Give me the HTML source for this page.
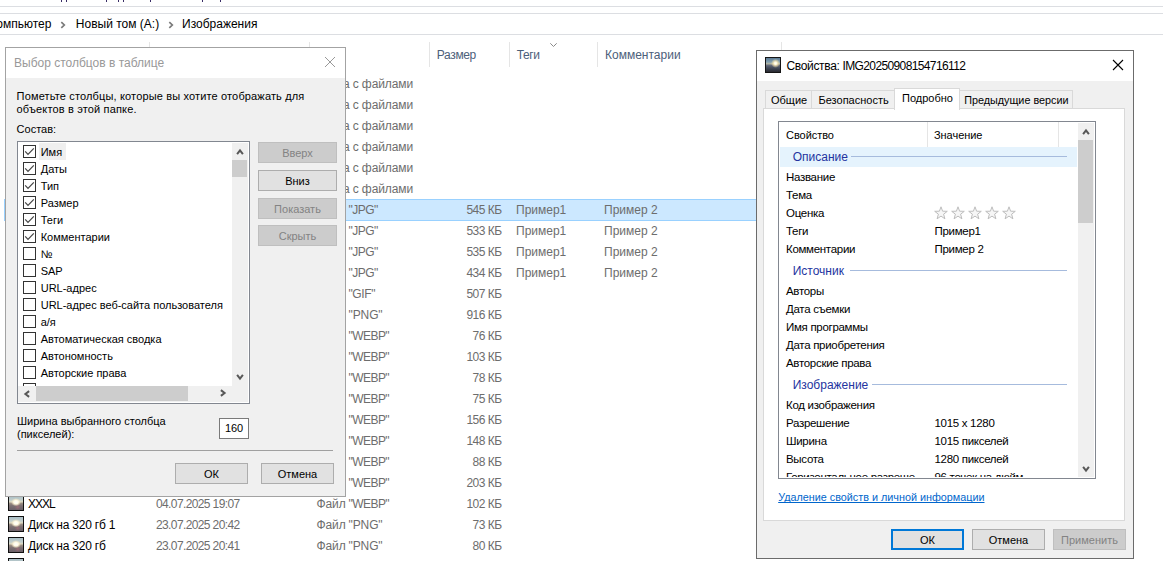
<!DOCTYPE html>
<html><head><meta charset="utf-8"><style>
html,body{margin:0;padding:0;background:#fff;width:1163px;height:561px;overflow:hidden;position:relative}
.t{position:absolute;white-space:pre;line-height:1;font-family:"Liberation Sans",sans-serif}
.b{position:absolute}
.thumb{width:16px;height:16px;box-sizing:border-box;border:1px solid #111;background:radial-gradient(ellipse 5px 4px at 50% 44%, #ffffff 0%, #fffbe6 45%, rgba(250,235,200,0.55) 75%, transparent 100%), radial-gradient(circle at 62% 80%, rgba(190,110,125,0.5) 0px, transparent 3px), linear-gradient(to bottom, #a9bec6 0%, #c3cfcc 30%, #ddd8c0 42%, #9a8e84 52%, #7c7072 70%, #6a6068 100%)}
.thumb2{width:16px;height:16px;box-sizing:border-box;border:1px solid #151515;background:radial-gradient(circle at 68% 38%, #ffffff 0px, #fffbe0 1.2px, rgba(250,230,170,0.7) 2.5px, transparent 4.5px), linear-gradient(to bottom, #5a7a94 0%, #86a2b2 30%, #b8b8a0 42%, #6a7080 50%, #4a5262 65%, #383e4a 82%, #2a2a30 100%)}
</style></head><body>
<div class="b" style="left:0px;top:6px;width:1163px;height:1px;background:#dcdee2;"></div>
<div class="b" style="left:0px;top:13px;width:1163px;height:1px;background:#dcdee2;"></div>
<div class="b" style="left:0px;top:34px;width:1163px;height:1px;background:#dcdee2;"></div>
<div class="t" style="left:-10.70px;top:17.74px;font-size:12px;color:#000;">Компьютер</div>
<svg class="b" style="left:60px;top:21px" width="6" height="8" viewBox="0 0 6 8"><path d="M1.3 1.2 L4.3 4 L1.3 6.8" fill="none" stroke="#7a7a7a" stroke-width="1.7"/></svg>
<div class="t" style="left:75.80px;top:17.74px;font-size:12px;color:#000;">Новый том (A:)</div>
<svg class="b" style="left:167.5px;top:21px" width="6" height="8" viewBox="0 0 6 8"><path d="M1.3 1.2 L4.3 4 L1.3 6.8" fill="none" stroke="#7a7a7a" stroke-width="1.7"/></svg>
<div class="t" style="left:182.00px;top:17.74px;font-size:12px;color:#000;">Изображения</div>
<div class="b" style="left:149px;top:42px;width:1px;height:25px;background:#e5e5e5;"></div>
<div class="b" style="left:309px;top:42px;width:1px;height:25px;background:#e5e5e5;"></div>
<div class="b" style="left:429px;top:42px;width:1px;height:25px;background:#e5e5e5;"></div>
<div class="b" style="left:509px;top:42px;width:1px;height:25px;background:#e5e5e5;"></div>
<div class="b" style="left:597px;top:42px;width:1px;height:25px;background:#e5e5e5;"></div>
<div class="b" style="left:781px;top:42px;width:1px;height:25px;background:#e5e5e5;"></div>
<div class="t" style="left:436.80px;top:48.84px;font-size:12px;color:#4c607a;letter-spacing:-0.35px;">Размер</div>
<div class="t" style="left:516.80px;top:48.84px;font-size:12px;color:#4c607a;letter-spacing:-0.45px;">Теги</div>
<div class="t" style="left:605.00px;top:48.84px;font-size:12px;color:#4c607a;">Комментарии</div>
<svg class="b" style="left:549px;top:42px" width="10" height="6" viewBox="0 0 10 6"><path d="M1.3 1.3 L4.5 4.5 L7.7 1.3" fill="none" stroke="#8a8a8a" stroke-width="1"/></svg>
<div class="t" style="left:316.00px;top:77.64px;font-size:12px;color:#6d6d6d;letter-spacing:-0.1px;">Папка с файлами</div>
<div class="t" style="left:316.00px;top:98.64px;font-size:12px;color:#6d6d6d;letter-spacing:-0.1px;">Папка с файлами</div>
<div class="t" style="left:316.00px;top:119.64px;font-size:12px;color:#6d6d6d;letter-spacing:-0.1px;">Папка с файлами</div>
<div class="t" style="left:316.00px;top:140.64px;font-size:12px;color:#6d6d6d;letter-spacing:-0.1px;">Папка с файлами</div>
<div class="t" style="left:316.00px;top:161.64px;font-size:12px;color:#6d6d6d;letter-spacing:-0.1px;">Папка с файлами</div>
<div class="t" style="left:316.00px;top:182.64px;font-size:12px;color:#6d6d6d;letter-spacing:-0.1px;">Папка с файлами</div>
<div class="b" style="left:4px;top:199px;width:800px;height:22px;background:#cce8ff;border:1px solid #99d1ff;box-sizing:border-box;"></div>
<div class="t" style="left:316.50px;top:203.64px;font-size:12px;color:#6d6d6d;letter-spacing:-0.1px;">Файл</div>
<div class="t" style="left:348.50px;top:203.64px;font-size:12px;color:#6d6d6d;letter-spacing:-0.5px;">"JPG"</div>
<div class="t" style="right:661.40px;top:203.64px;font-size:12px;color:#6d6d6d;letter-spacing:-0.5px;">545 КБ</div>
<div class="t" style="left:516.00px;top:203.64px;font-size:12px;color:#6d6d6d;">Пример1</div>
<div class="t" style="left:604.00px;top:203.64px;font-size:12px;color:#6d6d6d;">Пример 2</div>
<div class="t" style="left:316.50px;top:224.64px;font-size:12px;color:#6d6d6d;letter-spacing:-0.1px;">Файл</div>
<div class="t" style="left:348.50px;top:224.64px;font-size:12px;color:#6d6d6d;letter-spacing:-0.5px;">"JPG"</div>
<div class="t" style="right:661.40px;top:224.64px;font-size:12px;color:#6d6d6d;letter-spacing:-0.5px;">533 КБ</div>
<div class="t" style="left:516.00px;top:224.64px;font-size:12px;color:#6d6d6d;">Пример1</div>
<div class="t" style="left:604.00px;top:224.64px;font-size:12px;color:#6d6d6d;">Пример 2</div>
<div class="t" style="left:316.50px;top:245.64px;font-size:12px;color:#6d6d6d;letter-spacing:-0.1px;">Файл</div>
<div class="t" style="left:348.50px;top:245.64px;font-size:12px;color:#6d6d6d;letter-spacing:-0.5px;">"JPG"</div>
<div class="t" style="right:661.40px;top:245.64px;font-size:12px;color:#6d6d6d;letter-spacing:-0.5px;">535 КБ</div>
<div class="t" style="left:516.00px;top:245.64px;font-size:12px;color:#6d6d6d;">Пример1</div>
<div class="t" style="left:604.00px;top:245.64px;font-size:12px;color:#6d6d6d;">Пример 2</div>
<div class="t" style="left:316.50px;top:266.64px;font-size:12px;color:#6d6d6d;letter-spacing:-0.1px;">Файл</div>
<div class="t" style="left:348.50px;top:266.64px;font-size:12px;color:#6d6d6d;letter-spacing:-0.5px;">"JPG"</div>
<div class="t" style="right:661.40px;top:266.64px;font-size:12px;color:#6d6d6d;letter-spacing:-0.5px;">434 КБ</div>
<div class="t" style="left:516.00px;top:266.64px;font-size:12px;color:#6d6d6d;">Пример1</div>
<div class="t" style="left:604.00px;top:266.64px;font-size:12px;color:#6d6d6d;">Пример 2</div>
<div class="t" style="left:316.50px;top:287.64px;font-size:12px;color:#6d6d6d;letter-spacing:-0.1px;">Файл</div>
<div class="t" style="left:348.50px;top:287.64px;font-size:12px;color:#6d6d6d;letter-spacing:-0.4px;">"GIF"</div>
<div class="t" style="right:661.40px;top:287.64px;font-size:12px;color:#6d6d6d;letter-spacing:-0.5px;">507 КБ</div>
<div class="t" style="left:316.50px;top:308.64px;font-size:12px;color:#6d6d6d;letter-spacing:-0.1px;">Файл</div>
<div class="t" style="left:348.50px;top:308.64px;font-size:12px;color:#6d6d6d;letter-spacing:-0.1px;">"PNG"</div>
<div class="t" style="right:661.40px;top:308.64px;font-size:12px;color:#6d6d6d;letter-spacing:-0.5px;">916 КБ</div>
<div class="t" style="left:316.50px;top:329.64px;font-size:12px;color:#6d6d6d;letter-spacing:-0.1px;">Файл</div>
<div class="t" style="left:348.50px;top:329.64px;font-size:12px;color:#6d6d6d;letter-spacing:-0.55px;">"WEBP"</div>
<div class="t" style="right:661.40px;top:329.64px;font-size:12px;color:#6d6d6d;letter-spacing:-0.5px;">76 КБ</div>
<div class="t" style="left:316.50px;top:350.64px;font-size:12px;color:#6d6d6d;letter-spacing:-0.1px;">Файл</div>
<div class="t" style="left:348.50px;top:350.64px;font-size:12px;color:#6d6d6d;letter-spacing:-0.55px;">"WEBP"</div>
<div class="t" style="right:661.40px;top:350.64px;font-size:12px;color:#6d6d6d;letter-spacing:-0.5px;">103 КБ</div>
<div class="t" style="left:316.50px;top:371.64px;font-size:12px;color:#6d6d6d;letter-spacing:-0.1px;">Файл</div>
<div class="t" style="left:348.50px;top:371.64px;font-size:12px;color:#6d6d6d;letter-spacing:-0.55px;">"WEBP"</div>
<div class="t" style="right:661.40px;top:371.64px;font-size:12px;color:#6d6d6d;letter-spacing:-0.5px;">78 КБ</div>
<div class="t" style="left:316.50px;top:392.64px;font-size:12px;color:#6d6d6d;letter-spacing:-0.1px;">Файл</div>
<div class="t" style="left:348.50px;top:392.64px;font-size:12px;color:#6d6d6d;letter-spacing:-0.55px;">"WEBP"</div>
<div class="t" style="right:661.40px;top:392.64px;font-size:12px;color:#6d6d6d;letter-spacing:-0.5px;">75 КБ</div>
<div class="t" style="left:316.50px;top:413.64px;font-size:12px;color:#6d6d6d;letter-spacing:-0.1px;">Файл</div>
<div class="t" style="left:348.50px;top:413.64px;font-size:12px;color:#6d6d6d;letter-spacing:-0.55px;">"WEBP"</div>
<div class="t" style="right:661.40px;top:413.64px;font-size:12px;color:#6d6d6d;letter-spacing:-0.5px;">156 КБ</div>
<div class="t" style="left:316.50px;top:434.64px;font-size:12px;color:#6d6d6d;letter-spacing:-0.1px;">Файл</div>
<div class="t" style="left:348.50px;top:434.64px;font-size:12px;color:#6d6d6d;letter-spacing:-0.55px;">"WEBP"</div>
<div class="t" style="right:661.40px;top:434.64px;font-size:12px;color:#6d6d6d;letter-spacing:-0.5px;">148 КБ</div>
<div class="t" style="left:316.50px;top:455.64px;font-size:12px;color:#6d6d6d;letter-spacing:-0.1px;">Файл</div>
<div class="t" style="left:348.50px;top:455.64px;font-size:12px;color:#6d6d6d;letter-spacing:-0.55px;">"WEBP"</div>
<div class="t" style="right:661.40px;top:455.64px;font-size:12px;color:#6d6d6d;letter-spacing:-0.5px;">88 КБ</div>
<div class="t" style="left:316.50px;top:476.64px;font-size:12px;color:#6d6d6d;letter-spacing:-0.1px;">Файл</div>
<div class="t" style="left:348.50px;top:476.64px;font-size:12px;color:#6d6d6d;letter-spacing:-0.55px;">"WEBP"</div>
<div class="t" style="right:661.40px;top:476.64px;font-size:12px;color:#6d6d6d;letter-spacing:-0.5px;">203 КБ</div>
<div class="b thumb" style="left:8px;top:495px"></div>
<div class="t" style="left:28.00px;top:497.64px;font-size:12px;color:#000;letter-spacing:-1.0px;">XXXL</div>
<div class="t" style="left:156.00px;top:497.64px;font-size:12px;color:#6d6d6d;letter-spacing:-0.62px;">04.07.2025 19:07</div>
<div class="t" style="left:316.50px;top:497.64px;font-size:12px;color:#6d6d6d;letter-spacing:-0.1px;">Файл</div>
<div class="t" style="left:348.50px;top:497.64px;font-size:12px;color:#6d6d6d;letter-spacing:-0.55px;">"WEBP"</div>
<div class="t" style="right:661.40px;top:497.64px;font-size:12px;color:#6d6d6d;letter-spacing:-0.5px;">102 КБ</div>
<div class="b thumb" style="left:8px;top:516px"></div>
<div class="t" style="left:28.00px;top:518.64px;font-size:12px;color:#000;letter-spacing:-0.22px;">Диск на 320 гб 1</div>
<div class="t" style="left:156.00px;top:518.64px;font-size:12px;color:#6d6d6d;letter-spacing:-0.62px;">23.07.2025 20:42</div>
<div class="t" style="left:316.50px;top:518.64px;font-size:12px;color:#6d6d6d;letter-spacing:-0.1px;">Файл</div>
<div class="t" style="left:348.50px;top:518.64px;font-size:12px;color:#6d6d6d;letter-spacing:-0.1px;">"PNG"</div>
<div class="t" style="right:661.40px;top:518.64px;font-size:12px;color:#6d6d6d;letter-spacing:-0.5px;">73 КБ</div>
<div class="b thumb" style="left:8px;top:537px"></div>
<div class="t" style="left:28.00px;top:539.64px;font-size:12px;color:#000;letter-spacing:-0.22px;">Диск на 320 гб</div>
<div class="t" style="left:156.00px;top:539.64px;font-size:12px;color:#6d6d6d;letter-spacing:-0.62px;">23.07.2025 20:41</div>
<div class="t" style="left:316.50px;top:539.64px;font-size:12px;color:#6d6d6d;letter-spacing:-0.1px;">Файл</div>
<div class="t" style="left:348.50px;top:539.64px;font-size:12px;color:#6d6d6d;letter-spacing:-0.1px;">"PNG"</div>
<div class="t" style="right:661.40px;top:539.64px;font-size:12px;color:#6d6d6d;letter-spacing:-0.5px;">80 КБ</div>
<div class="b thumb" style="left:8px;top:558px"></div>
<div class="b" style="left:61px;top:0px;width:1.2px;height:1.5px;background:#3a2d66"></div>
<div class="b" style="left:66px;top:0px;width:1.2px;height:1.5px;background:#3a2d66"></div>
<div class="b" style="left:106px;top:0px;width:1.2px;height:1.5px;background:#3a2d66"></div>
<div class="b" style="left:118px;top:0px;width:1.2px;height:1.5px;background:#3a2d66"></div>
<div class="b" style="left:123px;top:0px;width:1.2px;height:1.5px;background:#3a2d66"></div>
<div class="b" style="left:150px;top:0px;width:1.2px;height:1.5px;background:#3a2d66"></div>
<div class="b" style="left:201.5px;top:0px;width:1.2px;height:1.5px;background:#3a2d66"></div>
<div class="b" style="left:220px;top:0px;width:1.2px;height:1.5px;background:#3a2d66"></div>
<div class="b" style="left:5px;top:47px;width:341px;height:450px;background:#f0f0f0;border:1px solid #a3a3a3;box-sizing:border-box"></div>
<div class="b" style="left:6px;top:48px;width:339px;height:30px;background:#fff;"></div>
<div class="t" style="left:14.00px;top:56.54px;font-size:12px;color:#999;">Выбор столбцов в таблице</div>
<svg class="b" style="left:324px;top:56px" width="12" height="12" viewBox="0 0 12 12"><path d="M1 1 L11 11 M11 1 L1 11" stroke="#999" stroke-width="1"/></svg>
<div class="t" style="left:16.60px;top:91.39px;font-size:11px;color:#000;letter-spacing:0.15px;">Пометьте столбцы, которые вы хотите отображать для</div>
<div class="t" style="left:16.60px;top:104.39px;font-size:11px;color:#000;letter-spacing:0.16px;">объектов в этой папке.</div>
<div class="t" style="left:16.60px;top:124.39px;font-size:11px;color:#000;">Состав:</div>
<div class="b" style="left:17px;top:141px;width:233px;height:263px;background:#fff;border:1px solid #828790;box-sizing:border-box;"></div>
<div class="b" style="left:18px;top:142px;width:214px;height:244px;overflow:hidden">
<div class="b" style="left:21px;top:1px;width:27px;height:17px;background:#efefef;"></div>
<div class="b" style="left:5px;top:3px;width:13px;height:13px;border:1px solid #333;box-sizing:border-box;background:#fff"></div>
<svg class="b" style="left:5px;top:3px" width="13" height="13" viewBox="0 0 13 13"><path d="M2.2 6.3 L5 9.3 L10.8 3.3" fill="none" stroke="#444" stroke-width="1.2"/></svg>
<div class="t" style="left:22.700000000000003px;top:5.09px;font-size:11px;color:#000">Имя</div>
<div class="b" style="left:5px;top:20px;width:13px;height:13px;border:1px solid #333;box-sizing:border-box;background:#fff"></div>
<svg class="b" style="left:5px;top:20px" width="13" height="13" viewBox="0 0 13 13"><path d="M2.2 6.3 L5 9.3 L10.8 3.3" fill="none" stroke="#444" stroke-width="1.2"/></svg>
<div class="t" style="left:22.700000000000003px;top:22.09px;font-size:11px;color:#000">Даты</div>
<div class="b" style="left:5px;top:37px;width:13px;height:13px;border:1px solid #333;box-sizing:border-box;background:#fff"></div>
<svg class="b" style="left:5px;top:37px" width="13" height="13" viewBox="0 0 13 13"><path d="M2.2 6.3 L5 9.3 L10.8 3.3" fill="none" stroke="#444" stroke-width="1.2"/></svg>
<div class="t" style="left:22.700000000000003px;top:39.09px;font-size:11px;color:#000">Тип</div>
<div class="b" style="left:5px;top:54px;width:13px;height:13px;border:1px solid #333;box-sizing:border-box;background:#fff"></div>
<svg class="b" style="left:5px;top:54px" width="13" height="13" viewBox="0 0 13 13"><path d="M2.2 6.3 L5 9.3 L10.8 3.3" fill="none" stroke="#444" stroke-width="1.2"/></svg>
<div class="t" style="left:22.700000000000003px;top:56.09px;font-size:11px;color:#000">Размер</div>
<div class="b" style="left:5px;top:71px;width:13px;height:13px;border:1px solid #333;box-sizing:border-box;background:#fff"></div>
<svg class="b" style="left:5px;top:71px" width="13" height="13" viewBox="0 0 13 13"><path d="M2.2 6.3 L5 9.3 L10.8 3.3" fill="none" stroke="#444" stroke-width="1.2"/></svg>
<div class="t" style="left:22.700000000000003px;top:73.09px;font-size:11px;color:#000">Теги</div>
<div class="b" style="left:5px;top:88px;width:13px;height:13px;border:1px solid #333;box-sizing:border-box;background:#fff"></div>
<svg class="b" style="left:5px;top:88px" width="13" height="13" viewBox="0 0 13 13"><path d="M2.2 6.3 L5 9.3 L10.8 3.3" fill="none" stroke="#444" stroke-width="1.2"/></svg>
<div class="t" style="left:22.700000000000003px;top:90.09px;font-size:11px;color:#000">Комментарии</div>
<div class="b" style="left:5px;top:105px;width:13px;height:13px;border:1px solid #333;box-sizing:border-box;background:#fff"></div>
<div class="t" style="left:22.700000000000003px;top:107.09px;font-size:11px;color:#000">№</div>
<div class="b" style="left:5px;top:122px;width:13px;height:13px;border:1px solid #333;box-sizing:border-box;background:#fff"></div>
<div class="t" style="left:22.700000000000003px;top:124.09px;font-size:11px;color:#000">SAP</div>
<div class="b" style="left:5px;top:139px;width:13px;height:13px;border:1px solid #333;box-sizing:border-box;background:#fff"></div>
<div class="t" style="left:22.700000000000003px;top:141.09px;font-size:11px;color:#000">URL-адрес</div>
<div class="b" style="left:5px;top:156px;width:13px;height:13px;border:1px solid #333;box-sizing:border-box;background:#fff"></div>
<div class="t" style="left:22.700000000000003px;top:158.09px;font-size:11px;color:#000">URL-адрес веб-сайта пользователя</div>
<div class="b" style="left:5px;top:173px;width:13px;height:13px;border:1px solid #333;box-sizing:border-box;background:#fff"></div>
<div class="t" style="left:22.700000000000003px;top:175.09px;font-size:11px;color:#000">а/я</div>
<div class="b" style="left:5px;top:190px;width:13px;height:13px;border:1px solid #333;box-sizing:border-box;background:#fff"></div>
<div class="t" style="left:22.700000000000003px;top:192.09px;font-size:11px;color:#000">Автоматическая сводка</div>
<div class="b" style="left:5px;top:207px;width:13px;height:13px;border:1px solid #333;box-sizing:border-box;background:#fff"></div>
<div class="t" style="left:22.700000000000003px;top:209.09px;font-size:11px;color:#000">Автономность</div>
<div class="b" style="left:5px;top:224px;width:13px;height:13px;border:1px solid #333;box-sizing:border-box;background:#fff"></div>
<div class="t" style="left:22.700000000000003px;top:226.09px;font-size:11px;color:#000">Авторские права</div>
<div class="b" style="left:5px;top:241px;width:13px;height:13px;border:1px solid #333;box-sizing:border-box;background:#fff"></div>
<div class="t" style="left:22.700000000000003px;top:243.09px;font-size:11px;color:#000">Авторы</div>
</div>
<div class="b" style="left:232px;top:143px;width:16px;height:259px;background:#f0f0f0;"></div>
<div class="b" style="left:232px;top:160px;width:15px;height:17px;background:#cdcdcd;"></div>
<svg class="b" style="left:233.50px;top:146.30px" width="12" height="12" viewBox="0 0 12 12"><path d="M3.1 8.1 L6 4.4 L8.9 8.1" fill="none" stroke="#585858" stroke-width="2.0" stroke-linejoin="miter"/></svg>
<svg class="b" style="left:233.50px;top:370.70px" width="12" height="12" viewBox="0 0 12 12"><path d="M3.1 3.9 L6 7.6 L8.9 3.9" fill="none" stroke="#585858" stroke-width="2.0" stroke-linejoin="miter"/></svg>
<div class="b" style="left:18px;top:386px;width:214px;height:16px;background:#f0f0f0;"></div>
<div class="b" style="left:36px;top:386px;width:152px;height:15px;background:#cdcdcd;"></div>
<svg class="b" style="left:21.30px;top:387.80px" width="12" height="12" viewBox="0 0 12 12"><path d="M8.1 3.1 L4.4 6 L8.1 8.9" fill="none" stroke="#585858" stroke-width="2.0" stroke-linejoin="miter"/></svg>
<svg class="b" style="left:217.30px;top:387.40px" width="12" height="12" viewBox="0 0 12 12"><path d="M3.9 3.1 L7.6 6 L3.9 8.9" fill="none" stroke="#585858" stroke-width="2.0" stroke-linejoin="miter"/></svg>
<div class="b" style="left:258px;top:142px;width:79px;height:21px;background:#cccccc;border:1px solid #bfbfbf;box-sizing:border-box"></div>
<div class="t" style="left:258px;top:147.62px;width:79px;text-align:center;font-size:11px;color:#838383">Вверх</div>
<div class="b" style="left:258px;top:170px;width:79px;height:21px;background:#e1e1e1;border:1px solid #adadad;box-sizing:border-box"></div>
<div class="t" style="left:258px;top:175.62px;width:79px;text-align:center;font-size:11px;color:#000">Вниз</div>
<div class="b" style="left:258px;top:198px;width:79px;height:21px;background:#cccccc;border:1px solid #bfbfbf;box-sizing:border-box"></div>
<div class="t" style="left:258px;top:203.62px;width:79px;text-align:center;font-size:11px;color:#838383">Показать</div>
<div class="b" style="left:258px;top:225px;width:79px;height:21px;background:#cccccc;border:1px solid #bfbfbf;box-sizing:border-box"></div>
<div class="t" style="left:258px;top:230.62px;width:79px;text-align:center;font-size:11px;color:#838383">Скрыть</div>
<div class="t" style="left:17.00px;top:416.39px;font-size:11px;color:#000;">Ширина выбранного столбца</div>
<div class="t" style="left:17.00px;top:428.99px;font-size:11px;color:#000;">(пикселей):</div>
<div class="b" style="left:219px;top:418px;width:30px;height:21px;background:#fff;border:1px solid #7a7a7a;box-sizing:border-box;"></div>
<div class="t" style="left:219px;top:423.2px;width:30px;text-align:center;font-size:11px;letter-spacing:-0.2px">160</div>
<div class="b" style="left:17px;top:450px;width:316px;height:1px;background:#a0a0a0;"></div>
<div class="b" style="left:175px;top:463px;width:73px;height:21px;background:#e1e1e1;border:1px solid #adadad;box-sizing:border-box"></div>
<div class="t" style="left:175px;top:468.62px;width:73px;text-align:center;font-size:11px;color:#000">ОК</div>
<div class="b" style="left:261px;top:463px;width:73px;height:21px;background:#e1e1e1;border:1px solid #adadad;box-sizing:border-box"></div>
<div class="t" style="left:261px;top:468.62px;width:73px;text-align:center;font-size:11px;color:#000">Отмена</div>
<div class="b" style="left:756px;top:50px;width:378px;height:509px;background:#f0f0f0;border:1px solid #6b6b6b;box-sizing:border-box"></div>
<div class="b" style="left:757px;top:51px;width:376px;height:30px;background:#fff;"></div>
<div class="b thumb2" style="left:765px;top:57px"></div>
<div class="t" style="left:786.50px;top:59.84px;font-size:12px;color:#000;"><span style="letter-spacing:-0.34px">Свойства: </span><span style="letter-spacing:-0.62px">IMG20250908154716112</span></div>
<svg class="b" style="left:1112px;top:59px" width="12" height="12" viewBox="0 0 12 12"><path d="M1 1 L11 11 M11 1 L1 11" stroke="#000" stroke-width="1.1"/></svg>
<div class="b" style="left:763px;top:108px;width:362px;height:413px;background:#fff;border:1px solid #d9d9d9;box-sizing:border-box;"></div>
<div class="b" style="left:765px;top:90px;width:47px;height:19px;background:#f0f0f0;border:1px solid #d9d9d9;box-sizing:border-box"></div>
<div class="b" style="left:811px;top:90px;width:84px;height:19px;background:#f0f0f0;border:1px solid #d9d9d9;box-sizing:border-box"></div>
<div class="b" style="left:959px;top:90px;width:114px;height:19px;background:#f0f0f0;border:1px solid #d9d9d9;box-sizing:border-box"></div>
<div class="b" style="left:894px;top:88px;width:66px;height:22px;background:#fff;border:1px solid #d9d9d9;border-bottom:none;box-sizing:border-box"></div>
<div class="t" style="left:771.00px;top:94.89px;font-size:11px;color:#000;">Общие</div>
<div class="t" style="left:818.50px;top:94.89px;font-size:11px;color:#000;">Безопасность</div>
<div class="t" style="left:902.00px;top:92.89px;font-size:11px;color:#000;">Подробно</div>
<div class="t" style="left:964.20px;top:95.06px;font-size:10.8px;color:#000;">Предыдущие версии</div>
<div class="b" style="left:778px;top:121px;width:318px;height:358px;background:#fff;border:1px solid #828790;box-sizing:border-box;"></div>
<div class="b" style="left:927px;top:122px;width:1px;height:25px;background:#e5e5e5;"></div>
<div class="b" style="left:1058px;top:122px;width:1px;height:25px;background:#e5e5e5;"></div>
<div class="t" style="left:786.00px;top:129.99px;font-size:11px;color:#000;letter-spacing:-0.05px;">Свойство</div>
<div class="t" style="left:934.00px;top:129.99px;font-size:11px;color:#000;letter-spacing:-0.05px;">Значение</div>
<div class="b" style="left:1078px;top:123px;width:16px;height:354px;background:#f0f0f0;"></div>
<div class="b" style="left:1078px;top:140px;width:15px;height:83px;background:#cdcdcd;"></div>
<svg class="b" style="left:1079.50px;top:126.20px" width="12" height="12" viewBox="0 0 12 12"><path d="M3.1 8.1 L6 4.4 L8.9 8.1" fill="none" stroke="#585858" stroke-width="2.0" stroke-linejoin="miter"/></svg>
<svg class="b" style="left:1079.80px;top:463.20px" width="12" height="12" viewBox="0 0 12 12"><path d="M3.1 3.9 L6 7.6 L8.9 3.9" fill="none" stroke="#585858" stroke-width="2.0" stroke-linejoin="miter"/></svg>
<div class="b" style="left:779px;top:147px;width:299px;height:330px;overflow:hidden">
<div class="b" style="left:1px;top:0px;width:297px;height:20px;background:#e5f3fd"></div>
<div class="t" style="left:13.70px;top:3.74px;font-size:12px;color:#2434a0;letter-spacing:0px">Описание</div>
<div class="b" style="left:72px;top:9px;width:216px;height:1px;background:#a6bbdd"></div>
<div class="t" style="left:13.70px;top:118.44px;font-size:12px;color:#2434a0;letter-spacing:0px">Источник</div>
<div class="b" style="left:71px;top:123px;width:217px;height:1px;background:#a6bbdd"></div>
<div class="t" style="left:13.70px;top:231.74px;font-size:12px;color:#2434a0;letter-spacing:0px">Изображение</div>
<div class="b" style="left:93px;top:237px;width:195px;height:1px;background:#a6bbdd"></div>
<div class="t" style="left:7.00px;top:24.97px;font-size:11.5px;color:#000;letter-spacing:-0.3px">Название</div>
<div class="t" style="left:7.00px;top:42.97px;font-size:11.5px;color:#000;letter-spacing:-0.3px">Тема</div>
<div class="t" style="left:7.00px;top:60.97px;font-size:11.5px;color:#000;letter-spacing:-0.3px">Оценка</div>
<svg class="b" style="left:155px;top:59px" width="14" height="14" viewBox="0 0 14 14"><path d="M7 0.8 L8.6 5.2 L13.3 5.3 L9.6 8.2 L10.9 12.8 L7 10.1 L3.1 12.8 L4.4 8.2 L0.7 5.3 L5.4 5.2 Z" fill="#f6f6f6" stroke="#bdbdbd" stroke-width="1"/></svg>
<svg class="b" style="left:172px;top:59px" width="14" height="14" viewBox="0 0 14 14"><path d="M7 0.8 L8.6 5.2 L13.3 5.3 L9.6 8.2 L10.9 12.8 L7 10.1 L3.1 12.8 L4.4 8.2 L0.7 5.3 L5.4 5.2 Z" fill="#f6f6f6" stroke="#bdbdbd" stroke-width="1"/></svg>
<svg class="b" style="left:189px;top:59px" width="14" height="14" viewBox="0 0 14 14"><path d="M7 0.8 L8.6 5.2 L13.3 5.3 L9.6 8.2 L10.9 12.8 L7 10.1 L3.1 12.8 L4.4 8.2 L0.7 5.3 L5.4 5.2 Z" fill="#f6f6f6" stroke="#bdbdbd" stroke-width="1"/></svg>
<svg class="b" style="left:206px;top:59px" width="14" height="14" viewBox="0 0 14 14"><path d="M7 0.8 L8.6 5.2 L13.3 5.3 L9.6 8.2 L10.9 12.8 L7 10.1 L3.1 12.8 L4.4 8.2 L0.7 5.3 L5.4 5.2 Z" fill="#f6f6f6" stroke="#bdbdbd" stroke-width="1"/></svg>
<svg class="b" style="left:223px;top:59px" width="14" height="14" viewBox="0 0 14 14"><path d="M7 0.8 L8.6 5.2 L13.3 5.3 L9.6 8.2 L10.9 12.8 L7 10.1 L3.1 12.8 L4.4 8.2 L0.7 5.3 L5.4 5.2 Z" fill="#f6f6f6" stroke="#bdbdbd" stroke-width="1"/></svg>
<div class="t" style="left:7.00px;top:78.97px;font-size:11.5px;color:#000;letter-spacing:-0.3px">Теги</div>
<div class="t" style="left:155.50px;top:78.97px;font-size:11.5px;color:#000;letter-spacing:-0.3px">Пример1</div>
<div class="t" style="left:7.00px;top:96.97px;font-size:11.5px;color:#000;letter-spacing:-0.3px">Комментарии</div>
<div class="t" style="left:155.50px;top:96.97px;font-size:11.5px;color:#000;letter-spacing:-0.3px">Пример 2</div>
<div class="t" style="left:7.00px;top:138.97px;font-size:11.5px;color:#000;letter-spacing:-0.3px">Авторы</div>
<div class="t" style="left:7.00px;top:156.97px;font-size:11.5px;color:#000;letter-spacing:-0.3px">Дата съемки</div>
<div class="t" style="left:7.00px;top:174.97px;font-size:11.5px;color:#000;letter-spacing:-0.3px">Имя программы</div>
<div class="t" style="left:7.00px;top:192.97px;font-size:11.5px;color:#000;letter-spacing:-0.3px">Дата приобретения</div>
<div class="t" style="left:7.00px;top:210.97px;font-size:11.5px;color:#000;letter-spacing:-0.3px">Авторские права</div>
<div class="t" style="left:7.00px;top:252.97px;font-size:11.5px;color:#000;letter-spacing:-0.3px">Код изображения</div>
<div class="t" style="left:7.00px;top:270.97px;font-size:11.5px;color:#000;letter-spacing:-0.3px">Разрешение</div>
<div class="t" style="left:155.50px;top:270.97px;font-size:11.5px;color:#000;letter-spacing:-0.3px">1015 x 1280</div>
<div class="t" style="left:7.00px;top:288.97px;font-size:11.5px;color:#000;letter-spacing:-0.3px">Ширина</div>
<div class="t" style="left:155.50px;top:288.97px;font-size:11.5px;color:#000;letter-spacing:-0.3px">1015 пикселей</div>
<div class="t" style="left:7.00px;top:306.97px;font-size:11.5px;color:#000;letter-spacing:-0.3px">Высота</div>
<div class="t" style="left:155.50px;top:306.97px;font-size:11.5px;color:#000;letter-spacing:-0.3px">1280 пикселей</div>
<div class="t" style="left:7.00px;top:324.97px;font-size:11.5px;color:#000;letter-spacing:-0.3px">Горизонтальное разреше</div>
<div class="t" style="left:155.50px;top:324.97px;font-size:11.5px;color:#000;letter-spacing:-0.3px">96 точек на дюйм</div>
</div>
<div class="t" style="left:778.20px;top:491.56px;font-size:10.8px;color:#0066cc;text-decoration:underline;text-decoration-skip-ink:none;">Удаление свойств и личной информации</div>
<div class="b" style="left:891px;top:529px;width:73px;height:21px;background:#e1e1e1;border:2px solid #0078d7;box-sizing:border-box"></div>
<div class="t" style="left:891px;top:534.62px;width:73px;text-align:center;font-size:11px;color:#000">ОК</div>
<div class="b" style="left:972px;top:529px;width:73px;height:21px;background:#e1e1e1;border:1px solid #adadad;box-sizing:border-box"></div>
<div class="t" style="left:972px;top:534.62px;width:73px;text-align:center;font-size:11px;color:#000">Отмена</div>
<div class="b" style="left:1053px;top:529px;width:73px;height:21px;background:#cccccc;border:1px solid #bfbfbf;box-sizing:border-box"></div>
<div class="t" style="left:1053px;top:534.62px;width:73px;text-align:center;font-size:11px;color:#838383">Применить</div>
</body></html>
